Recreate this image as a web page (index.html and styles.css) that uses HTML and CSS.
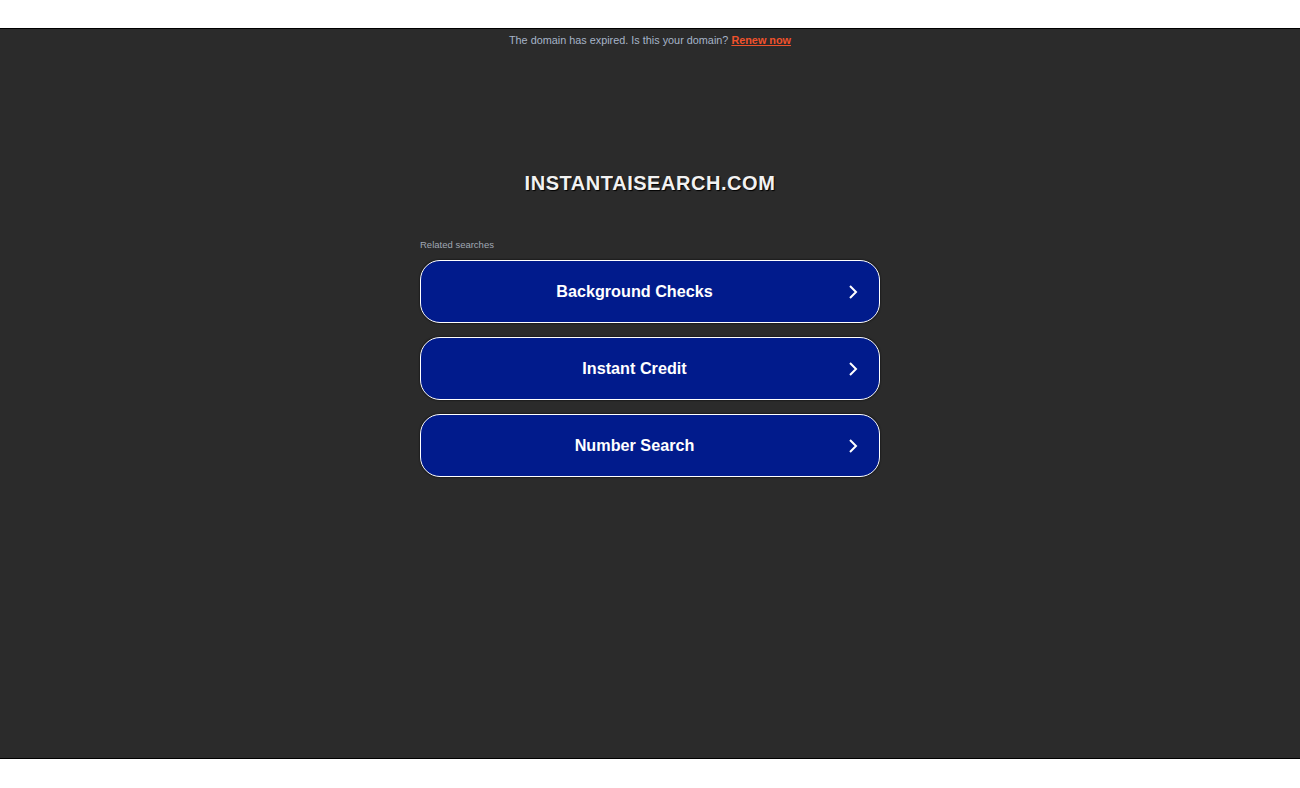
FILE: index.html
```html
<!DOCTYPE html>
<html>
<head>
<meta charset="utf-8">
<link rel="stylesheet" href="styles.css">
</head>
<body>
<div class="frame">
  <div class="notice">The domain has expired. Is this your domain? <a class="renew" href="#">Renew now</a></div>
  <h1 class="domain">INSTANTAISEARCH.COM</h1>
  <div class="related">
    <div class="related-label">Related searches</div>
    <a class="btn" href="#"><span class="btn-text">Background Checks</span><svg class="chev" viewBox="0 0 12 16" width="12" height="16"><path d="M3 2 L9 8 L3 14" fill="none" stroke="#fff" stroke-width="2"/></svg></a>
    <a class="btn" href="#"><span class="btn-text">Instant Credit</span><svg class="chev" viewBox="0 0 12 16" width="12" height="16"><path d="M3 2 L9 8 L3 14" fill="none" stroke="#fff" stroke-width="2"/></svg></a>
    <a class="btn" href="#"><span class="btn-text">Number Search</span><svg class="chev" viewBox="0 0 12 16" width="12" height="16"><path d="M3 2 L9 8 L3 14" fill="none" stroke="#fff" stroke-width="2"/></svg></a>
  </div>
</div>
</body>
</html>
```
FILE: styles.css
```css
html, body {
  margin: 0;
  padding: 0;
  background: #ffffff;
  font-family: "Liberation Sans", Arial, sans-serif;
}
body {
  padding-top: 28px;
  height: 760px;
}
.frame {
  box-sizing: border-box;
  height: 731px;
  background: #2b2b2b;
  border-top: 1px solid #000;
  border-bottom: 1px solid #000;
  display: flex;
  flex-direction: column;
  align-items: center;
}
.notice {
  margin-top: 5px;
  font-size: 10.85px;
  line-height: 13px;
  color: #a6b4c8;
}
.renew {
  color: #f0522c;
  font-weight: bold;
  text-decoration: underline;
}
.domain {
  margin: 124px 0 0 0;
  font-size: 20px;
  line-height: 24px;
  font-weight: bold;
  color: #f2f2f2;
  letter-spacing: 0.55px;
  text-shadow: 1px 1px 1px #000;
}
.related {
  margin-top: 44px;
  width: 460px;
  display: flex;
  flex-direction: column;
  gap: 14px;
}
.related-label {
  font-size: 9.5px;
  line-height: 12px;
  color: #a0a8b4;
  margin-bottom: -5px;
}
.btn {
  box-sizing: border-box;
  height: 63px;
  border: 1px solid #ffffff;
  border-radius: 20px;
  background: #011b8c;
  display: flex;
  align-items: center;
  padding: 0 20px 0 21px;
  text-decoration: none;
  box-shadow: 0 0 2px #000;
}
.btn-text {
  flex: 1;
  text-align: center;
  color: #ffffff;
  font-weight: bold;
  font-size: 16.2px;
}
.chev {
  margin-left: 20px;
}
```
